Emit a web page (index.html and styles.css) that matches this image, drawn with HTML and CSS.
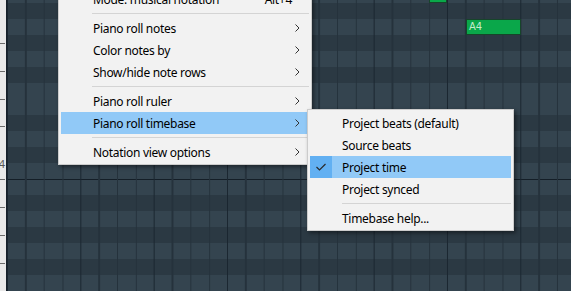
FILE: index.html
```html
<!DOCTYPE html>
<html lang="en">
<head>
    <meta charset="UTF-8">
    <title>Piano roll - timebase menu</title>
    <link rel="stylesheet" href="styles.css">
</head>
<body>
    <div class="app">
        <div class="keys">
            <span class="tick" style="top: 43px"></span>
            <span class="tick" style="top: 71px"></span>
            <span class="tick" style="top: 99px"></span>
            <span class="tick" style="top: 126px"></span>
            <span class="tick" style="top: 179px"></span>
            <span class="tick" style="top: 207px"></span>
            <span class="tick" style="top: 235px"></span>
            <span class="tick" style="top: 263px"></span>
            <span class="key-label">C4</span>
        </div>
        <div class="grid">
            <div class="note" style="left: 422px; top: -13px; width: 18px;"></div>
            <div class="note" style="left: 459px; top: 19px; width: 55px;">A4</div>
        </div>
    </div>

    <!-- piano roll options menu -->
    <div class="menu main-menu">
        <div class="item"><span class="label">Mode: musical notation</span><span class="shortcut">Alt+4</span></div>
        <div class="sep"></div>
        <div class="item"><span class="label">Piano roll notes</span><svg class="arrow" width="5" height="8" viewBox="0 0 5 8"><path d="M0.5 0.5 L4 4 L0.5 7.5" /></svg></div>
        <div class="item"><span class="label">Color notes by</span><svg class="arrow" width="5" height="8" viewBox="0 0 5 8"><path d="M0.5 0.5 L4 4 L0.5 7.5" /></svg></div>
        <div class="item"><span class="label">Show/hide note rows</span><svg class="arrow" width="5" height="8" viewBox="0 0 5 8"><path d="M0.5 0.5 L4 4 L0.5 7.5" /></svg></div>
        <div class="sep"></div>
        <div class="item"><span class="label">Piano roll ruler</span><svg class="arrow" width="5" height="8" viewBox="0 0 5 8"><path d="M0.5 0.5 L4 4 L0.5 7.5" /></svg></div>
        <div class="item active"><span class="label">Piano roll timebase</span><svg class="arrow" width="5" height="8" viewBox="0 0 5 8"><path d="M0.5 0.5 L4 4 L0.5 7.5" /></svg></div>
        <div class="sep"></div>
        <div class="item"><span class="label">Notation view options</span><svg class="arrow" width="5" height="8" viewBox="0 0 5 8"><path d="M0.5 0.5 L4 4 L0.5 7.5" /></svg></div>
    </div>

    <!-- timebase submenu -->
    <div class="menu sub-menu">
        <div class="item"><span class="label">Project beats (default)</span></div>
        <div class="item"><span class="label">Source beats</span></div>
        <div class="item active checked">
            <span class="check"><svg width="10" height="8" viewBox="0 0 10 8"><path d="M0.5 4 L3.5 7 L9.5 1" /></svg></span>
            <span class="label">Project time</span>
        </div>
        <div class="item"><span class="label">Project synced</span></div>
        <div class="sep"></div>
        <div class="item"><span class="label">Timebase help...</span></div>
    </div>
</body>
</html>
```

FILE: styles.css
```css
body {
    margin: 0;
    width: 571px;
    height: 291px;
    overflow: hidden;
    position: relative;
    font-family: "Noto Sans", "Open Sans", sans-serif;
    font-size: 12px;
    background: #2c3a44;
}
.app {
    display: flex;
    height: 291px;
}
.keys {
    width: 6px;
    flex: none;
    position: relative;
    overflow: hidden;
    background: #e9e9e9;
    border-right: 1px solid #16202a;
}
.tick {
    position: absolute;
    left: 0;
    width: 5px;
    height: 1px;
    background: #6b6b6b;
}
.key-label {
    position: absolute;
    top: 157px;
    right: 1px;
    font-size: 11px;
    line-height: 14px;
    color: #555;
}
.grid {
    flex: 1;
    position: relative;
    background-color: #34444f;
    background-image:
        linear-gradient(to right,
            #1a2630 0 1px, transparent 1px 18.33px,
            #25323c 18.33px 19.33px, transparent 19.33px 36.67px,
            #25323c 36.67px 37.67px, transparent 37.67px 55px,
            #25323c 55px 56px, transparent 56px),
        linear-gradient(to bottom,
            #141e27 0 1px,
            #34444f 1px 16px, #2b3943 16px 32px,
            #34444f 32px 48px, #2b3943 48px 64px,
            #34444f 64px 80px, #2b3943 80px 96px,
            #34444f 96px 128px, #2b3943 128px 144px,
            #34444f 144px 160px, #2b3943 160px 176px,
            #34444f 176px 192px);
    background-size: 73.333px 100%, 100% 192px;
    background-position: 0 0, 0 179px;
}
.note {
    position: absolute;
    height: 16px;
    box-sizing: border-box;
    background: #0aa74a;
    border: 1px solid #16452a;
    color: #c4ecca;
    font-family: "DejaVu Sans", sans-serif;
    font-size: 10px;
    line-height: 14px;
    padding-left: 2px;
}
.menu {
    position: absolute;
    box-sizing: border-box;
    background: #f2f2f2;
    border: 1px solid #cccccc;
    padding: 2px 2px 1px;
    box-shadow: 2px 2px 4px rgba(0, 0, 0, 0.45);
    color: #000;
    letter-spacing: -0.3px;
}
.main-menu {
    left: 58px;
    top: -15px;
    width: 254px;
}
.sub-menu {
    left: 307px;
    top: 109px;
    width: 207px;
}
.item {
    display: flex;
    align-items: center;
    height: 22px;
    padding-left: 32px;
    position: relative;
}
.item .label {
    flex: 1;
    white-space: nowrap;
}
.item.active {
    background: #91c9f7;
}
.shortcut {
    margin-right: 17px;
}
.arrow {
    margin-right: 9px;
    fill: none;
    stroke: #333;
    stroke-width: 1;
}
.check {
    position: absolute;
    left: 0;
    top: 0;
    width: 22px;
    height: 22px;
    background: #62b0f2;
    display: flex;
    align-items: center;
    justify-content: center;
}
.check svg {
    fill: none;
    stroke: #2a2a2a;
    stroke-width: 1.2;
}
.sep {
    height: 1px;
    background: #d4d4d4;
    margin: 3px 0 3px 31px;
}
.sub-menu .sep {
    margin-left: 32px;
}
```
